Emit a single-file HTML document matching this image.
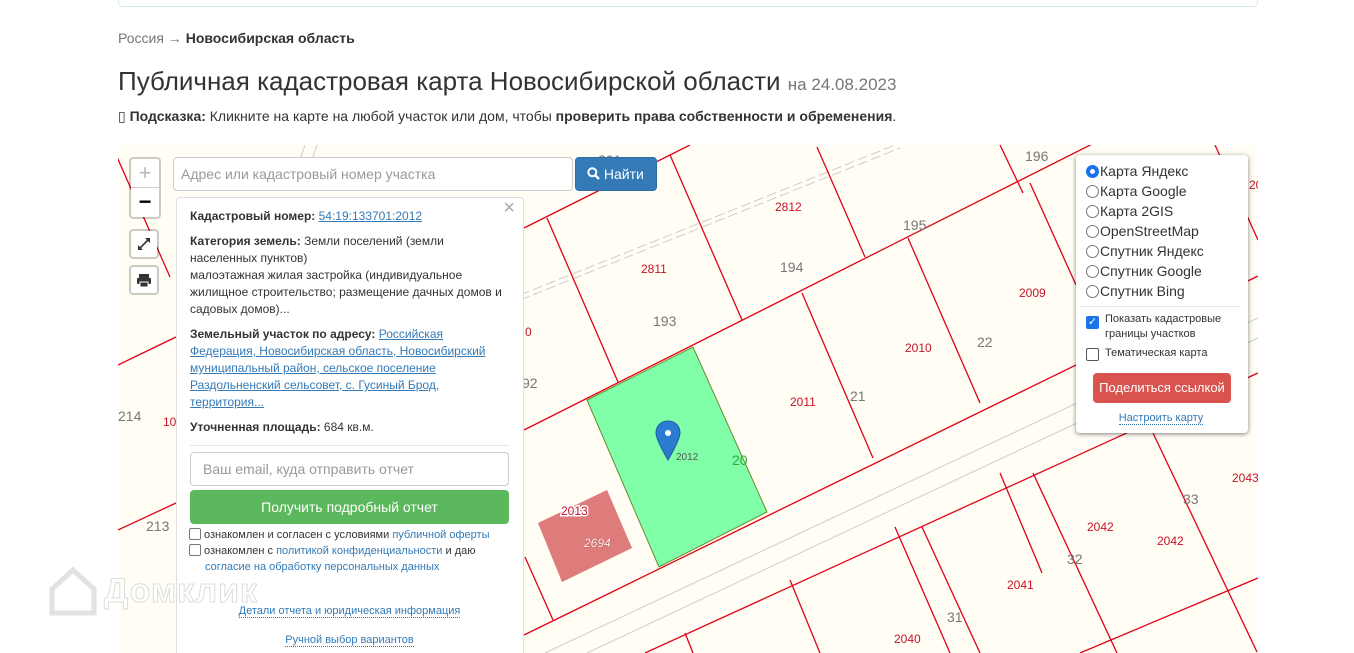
<!DOCTYPE html>
<html style="overflow:hidden;height:653px"><head><meta charset="utf-8">
<style>
*{box-sizing:border-box}
body{margin:0;width:1354px;height:653px;overflow:hidden;background:#fff;font-family:"Liberation Sans","DejaVu Sans",sans-serif;color:#333;position:relative}
.abs{position:absolute}
a{color:#337ab7}
.topbox{left:118px;top:-5px;width:1140px;height:12px;border:1px solid #d6e9f0;border-radius:0 0 4px 4px}
.bc{left:118px;top:30px;font-size:14px;color:#777}
.bc b{color:#333}
h1{position:absolute;left:118px;top:66px;margin:0;font-weight:400;font-size:26px;color:#333;white-space:nowrap}
h1 small{font-size:17px;color:#777}
.hint{left:118px;top:108px;font-size:14px;white-space:nowrap}
.map{left:118px;top:145px;width:1140px;height:508px;background:#fffdf4;overflow:hidden}
.btnw{background:#fff;border:2px solid rgba(0,0,0,.2);border-radius:4px;background-clip:padding-box}
.pop{left:176px;top:197px;width:348px;height:456px;overflow:hidden;background:#fff;border:1px solid #ddd;border-bottom:none;border-radius:4px 4px 0 0;font-size:12px;line-height:17px;padding:10px 14px 0 13px;color:#333}
.pop p{margin:0 0 8px}
.pop a{color:#337ab7}
.panel{left:1076px;top:155px;width:172px;height:278px;background:#fff;border-radius:4px;box-shadow:0 1px 5px rgba(0,0,0,.5);font-size:14px}
.r{position:absolute;left:10px;display:flex;align-items:center;height:20px}
.rc{width:13px;height:13px;border:1px solid #777;border-radius:50%;margin-right:1px;background:#fff}
.lab{font-size:12px;fill:#c5132a}
.gl{font-size:14px;fill:#777}
</style></head><body>
<div class="abs topbox"></div>
<div class="abs bc">Россия → <b>Новосибирская область</b></div>
<h1>Публичная кадастровая карта Новосибирской области <small>на 24.08.2023</small></h1>
<div class="abs hint">▯ <b>Подсказка:</b> Кликните на карте на любой участок или дом, чтобы <b>проверить права собственности и обременения</b>.</div>

<div class="abs map">
<svg width="1140" height="508" viewBox="118 145 1140 508" style="position:absolute;left:0;top:0">
<g stroke="#ccc" stroke-width="1" fill="none">
<path d="M520 295 L900 143" stroke-dasharray="10 4"/><path d="M520 300 L900 148" stroke-dasharray="10 4"/>
<path d="M545 653 L1258 318"/><path d="M587 653 L1258 338"/>
<path d="M300 160 L305 145 M312 160 L317 145" />
</g>
<polygon points="587,400 693,347 767,512 659,567" fill="#80ffa8" stroke="#6a8a2a" stroke-width="1"/>
<polygon points="538,523 607,490 632,548 562,582" fill="#de7b7b"/>
<g stroke="#e0001a" stroke-width="1.3" fill="none">
<path d="M524 228 L690 145"/>
<path d="M118 365 L176 337"/>
<path d="M118 530 L176 503"/>
<path d="M524 430 L1130 125"/>
<path d="M524 635 L1258 276"/>
<path d="M645 653 L1258 373"/>
<path d="M1080 653 L1258 578"/>
<path d="M547 218 L618 382"/><path d="M670 155 L742 320"/>
<path d="M817 147 L865 257"/><path d="M1000 145 L1023 193"/>
<path d="M802 293 L873 458"/><path d="M908 238 L980 403"/><path d="M1030 183 L1076 285"/>
<path d="M525 557 L553 620"/><path d="M790 580 L820 653"/><path d="M895 527 L950 653"/>
<path d="M1000 473 L1042 573"/><path d="M685 633 L693 653"/>
<path d="M922 527 L980 653"/><path d="M1033 473 L1117 653"/><path d="M1153 433 L1257 652"/>
<path d="M117 157 L170 277"/>
<path d="M1215 145 L1258 240"/>
</g>
<g font-family="Liberation Sans,sans-serif">
<text x="598" y="165" class="gl">201</text>
<text x="775" y="211" class="lab">2812</text><text x="641" y="273" class="lab">2811</text>
<text x="903" y="230" class="gl">195</text><text x="1025" y="161" class="gl">196</text>
<text x="780" y="272" class="gl">194</text><text x="653" y="326" class="gl">193</text>
<text x="1019" y="297" class="lab">2009</text><text x="905" y="352" class="lab">2010</text>
<text x="977" y="347" class="gl">22</text><text x="790" y="406" class="lab">2011</text>
<text x="850" y="401" class="gl">21</text><text x="676" y="460" class="lab" style="fill:#555;font-size:10px">2012</text>
<text x="732" y="465" class="gl" style="fill:#3a3">20</text>
<text x="561" y="515" class="lab" style="stroke:#fff;stroke-width:3;paint-order:stroke">2013</text>
<text x="584" y="547" class="lab" style="fill:#fff;font-style:italic;stroke:#a33;stroke-width:.6;paint-order:stroke">2694</text>
<text x="522" y="388" class="gl">92</text><text x="525" y="336" class="lab">0</text>
<text x="118" y="421" class="gl">214</text><text x="163" y="426" class="lab">10</text>
<text x="146" y="531" class="gl">213</text>
<text x="1232" y="482" class="lab">2043</text><text x="1183" y="504" class="gl">33</text>
<text x="1087" y="531" class="lab">2042</text><text x="1157" y="545" class="lab">2042</text>
<text x="1067" y="564" class="gl">32</text><text x="1007" y="589" class="lab">2041</text>
<text x="947" y="622" class="gl">31</text><text x="894" y="643" class="lab">2040</text>
<text x="1249" y="189" class="lab">20</text>
</g>
<path d="M668 421 c-7 0 -12 5 -12 12 c0 7 12 27 12 27 c0 0 12 -20 12 -27 c0 -7 -5 -12 -12 -12z" fill="#2b7bd0" stroke="#1d5fa3"/>
<circle cx="668" cy="433" r="3" fill="#fff"/>
</svg>
</div>

<div class="abs btnw" style="left:129px;top:157px;width:32px;height:62px"></div>
<div class="abs" style="left:131px;top:159px;width:28px;height:29px;text-align:center;font-size:22px;line-height:28px;color:#bbb;border-bottom:1px solid #ccc">+</div>
<div class="abs" style="left:131px;top:189px;width:28px;height:28px;text-align:center;font-size:22px;line-height:26px;color:#000;font-weight:bold">−</div>
<div class="abs btnw" style="left:129px;top:229px;width:30px;height:30px">
<svg width="26" height="26" viewBox="0 0 26 26"><path d="M8 18 L18 8" stroke="#333" stroke-width="1.6"/><path d="M14 7 L19 7 L19 12Z M7 14 L7 19 L12 19Z" fill="#333"/></svg></div>
<div class="abs btnw" style="left:129px;top:265px;width:30px;height:30px">
<svg width="26" height="26" viewBox="0 0 26 26"><rect x="8" y="7" width="10" height="4" fill="#333"/><rect x="6" y="11" width="14" height="6" rx="1" fill="#333"/><rect x="9" y="15" width="8" height="5" fill="#333" stroke="#fff"/></svg></div>

<div class="abs" style="left:173px;top:157px;width:400px;height:34px;background:#fff;border:1px solid #ccc;border-radius:4px;font-size:14px;color:#999;padding:8px 7px">Адрес или кадастровый номер участка</div>
<div class="abs" style="left:575px;top:157px;width:82px;height:34px;background:#337ab7;border:1px solid #2e6da4;border-radius:4px;color:#fff;font-size:14px;padding:8px 0 0 11px">
<svg width="13" height="13" viewBox="0 0 13 13" style="vertical-align:-1px"><circle cx="5.3" cy="5.3" r="4" fill="none" stroke="#fff" stroke-width="2"/><path d="M8.3 8.3 L12 12" stroke="#fff" stroke-width="2.4"/></svg> Найти</div>

<div class="abs pop">
<div class="abs" style="right:8px;top:2px;font-size:20px;color:#aaa">×</div>
<p><b>Кадастровый номер:</b> <a href="#">54:19:133701:2012</a></p>
<p><b>Категория земель:</b> Земли поселений (земли населенных пунктов)<br>малоэтажная жилая застройка (индивидуальное жилищное строительство; размещение дачных домов и садовых домов)...</p>
<p><b>Земельный участок по адресу:</b> <a href="#">Российская Федерация, Новосибирская область, Новосибирский муниципальный район, сельское поселение Раздольненский сельсовет, с. Гусиный Брод, территория...</a></p>
<p style="margin-bottom:9px"><b>Уточненная площадь:</b> 684 кв.м.</p>
<div style="border-top:1px solid #e5e5e5"></div>
<div style="margin-top:6px;height:34px;border:1px solid #ccc;border-radius:4px;font-size:14px;color:#999;padding:8px 12px">Ваш email, куда отправить отчет</div>
<div style="margin-top:4px;height:34px;background:#5cb85c;border-radius:4px;color:#fff;font-size:14px;text-align:center;line-height:34px">Получить подробный отчет</div>
<div style="font-size:11px;line-height:16px;margin-top:3px;color:#333;margin-left:-1px"><span style="display:inline-block;width:12px;height:12px;border:1px solid #777;border-radius:2px;vertical-align:-2px;margin-right:3px"></span>ознакомлен и согласен с условиями <span style="color:#337ab7">публичной оферты</span><br><span style="display:inline-block;width:12px;height:12px;border:1px solid #777;border-radius:2px;vertical-align:-2px;margin-right:3px"></span>ознакомлен с <span style="color:#337ab7">политикой конфиденциальности</span> и даю<br><span style="margin-left:16px;color:#337ab7">согласие на обработку персональных данных</span></div>
<div style="text-align:center;margin-top:28px;font-size:11px;color:#337ab7"><span style="border-bottom:1px dotted #337ab7">Детали отчета и юридическая информация</span></div>
<div style="text-align:center;margin-top:12px;font-size:11px;color:#337ab7"><span style="border-bottom:1px dotted #337ab7">Ручной выбор вариантов</span></div>
</div>

<div class="abs" style="left:48px;top:565px;color:rgba(255,255,255,.9);-webkit-text-stroke:1px #ddd;font-size:34px;font-weight:bold;display:flex;align-items:center">
<svg width="50" height="52" viewBox="0 0 50 52"><path d="M4 24 L25 5 L46 24 L46 48 L4 48Z" fill="none" stroke="#e2e2e2" stroke-width="5"/></svg><span style="margin-left:6px;letter-spacing:1px">Домклик</span></div>

<div class="abs panel">
<div class="r" style="top:6px"><span class="rc" style="border:4px solid #1a73e8"></span>Карта Яндекс</div>
<div class="r" style="top:26px"><span class="rc"></span>Карта Google</div>
<div class="r" style="top:46px"><span class="rc"></span>Карта 2GIS</div>
<div class="r" style="top:66px"><span class="rc"></span>OpenStreetMap</div>
<div class="r" style="top:86px"><span class="rc"></span>Спутник Яндекс</div>
<div class="r" style="top:106px"><span class="rc"></span>Спутник Google</div>
<div class="r" style="top:126px"><span class="rc"></span>Спутник Bing</div>
<div class="abs" style="left:4px;top:151px;width:160px;border-top:1px solid #e5e5e5"></div>
<div class="abs" style="left:10px;top:161px;width:13px;height:13px;background:#1a73e8;border-radius:2px;color:#fff;font-size:11px;line-height:13px;text-align:center">✓</div>
<div class="abs" style="left:29px;top:157px;font-size:11px;line-height:15px;color:#333">Показать кадастровые<br>границы участков</div>
<div class="abs" style="left:10px;top:193px;width:13px;height:13px;border:1px solid #555;border-radius:2px"></div>
<div class="abs" style="left:29px;top:192px;font-size:11px;color:#333">Тематическая карта</div>
<div class="abs" style="left:17px;top:218px;width:138px;height:30px;background:#d9534f;border-radius:4px;color:#fff;font-size:13px;text-align:center;line-height:30px">Поделиться ссылкой</div>
<div class="abs" style="left:0;top:257px;width:170px;text-align:center;font-size:11px;color:#337ab7"><span style="border-bottom:1px dotted #337ab7">Настроить карту</span></div>
</div>
</body></html>
